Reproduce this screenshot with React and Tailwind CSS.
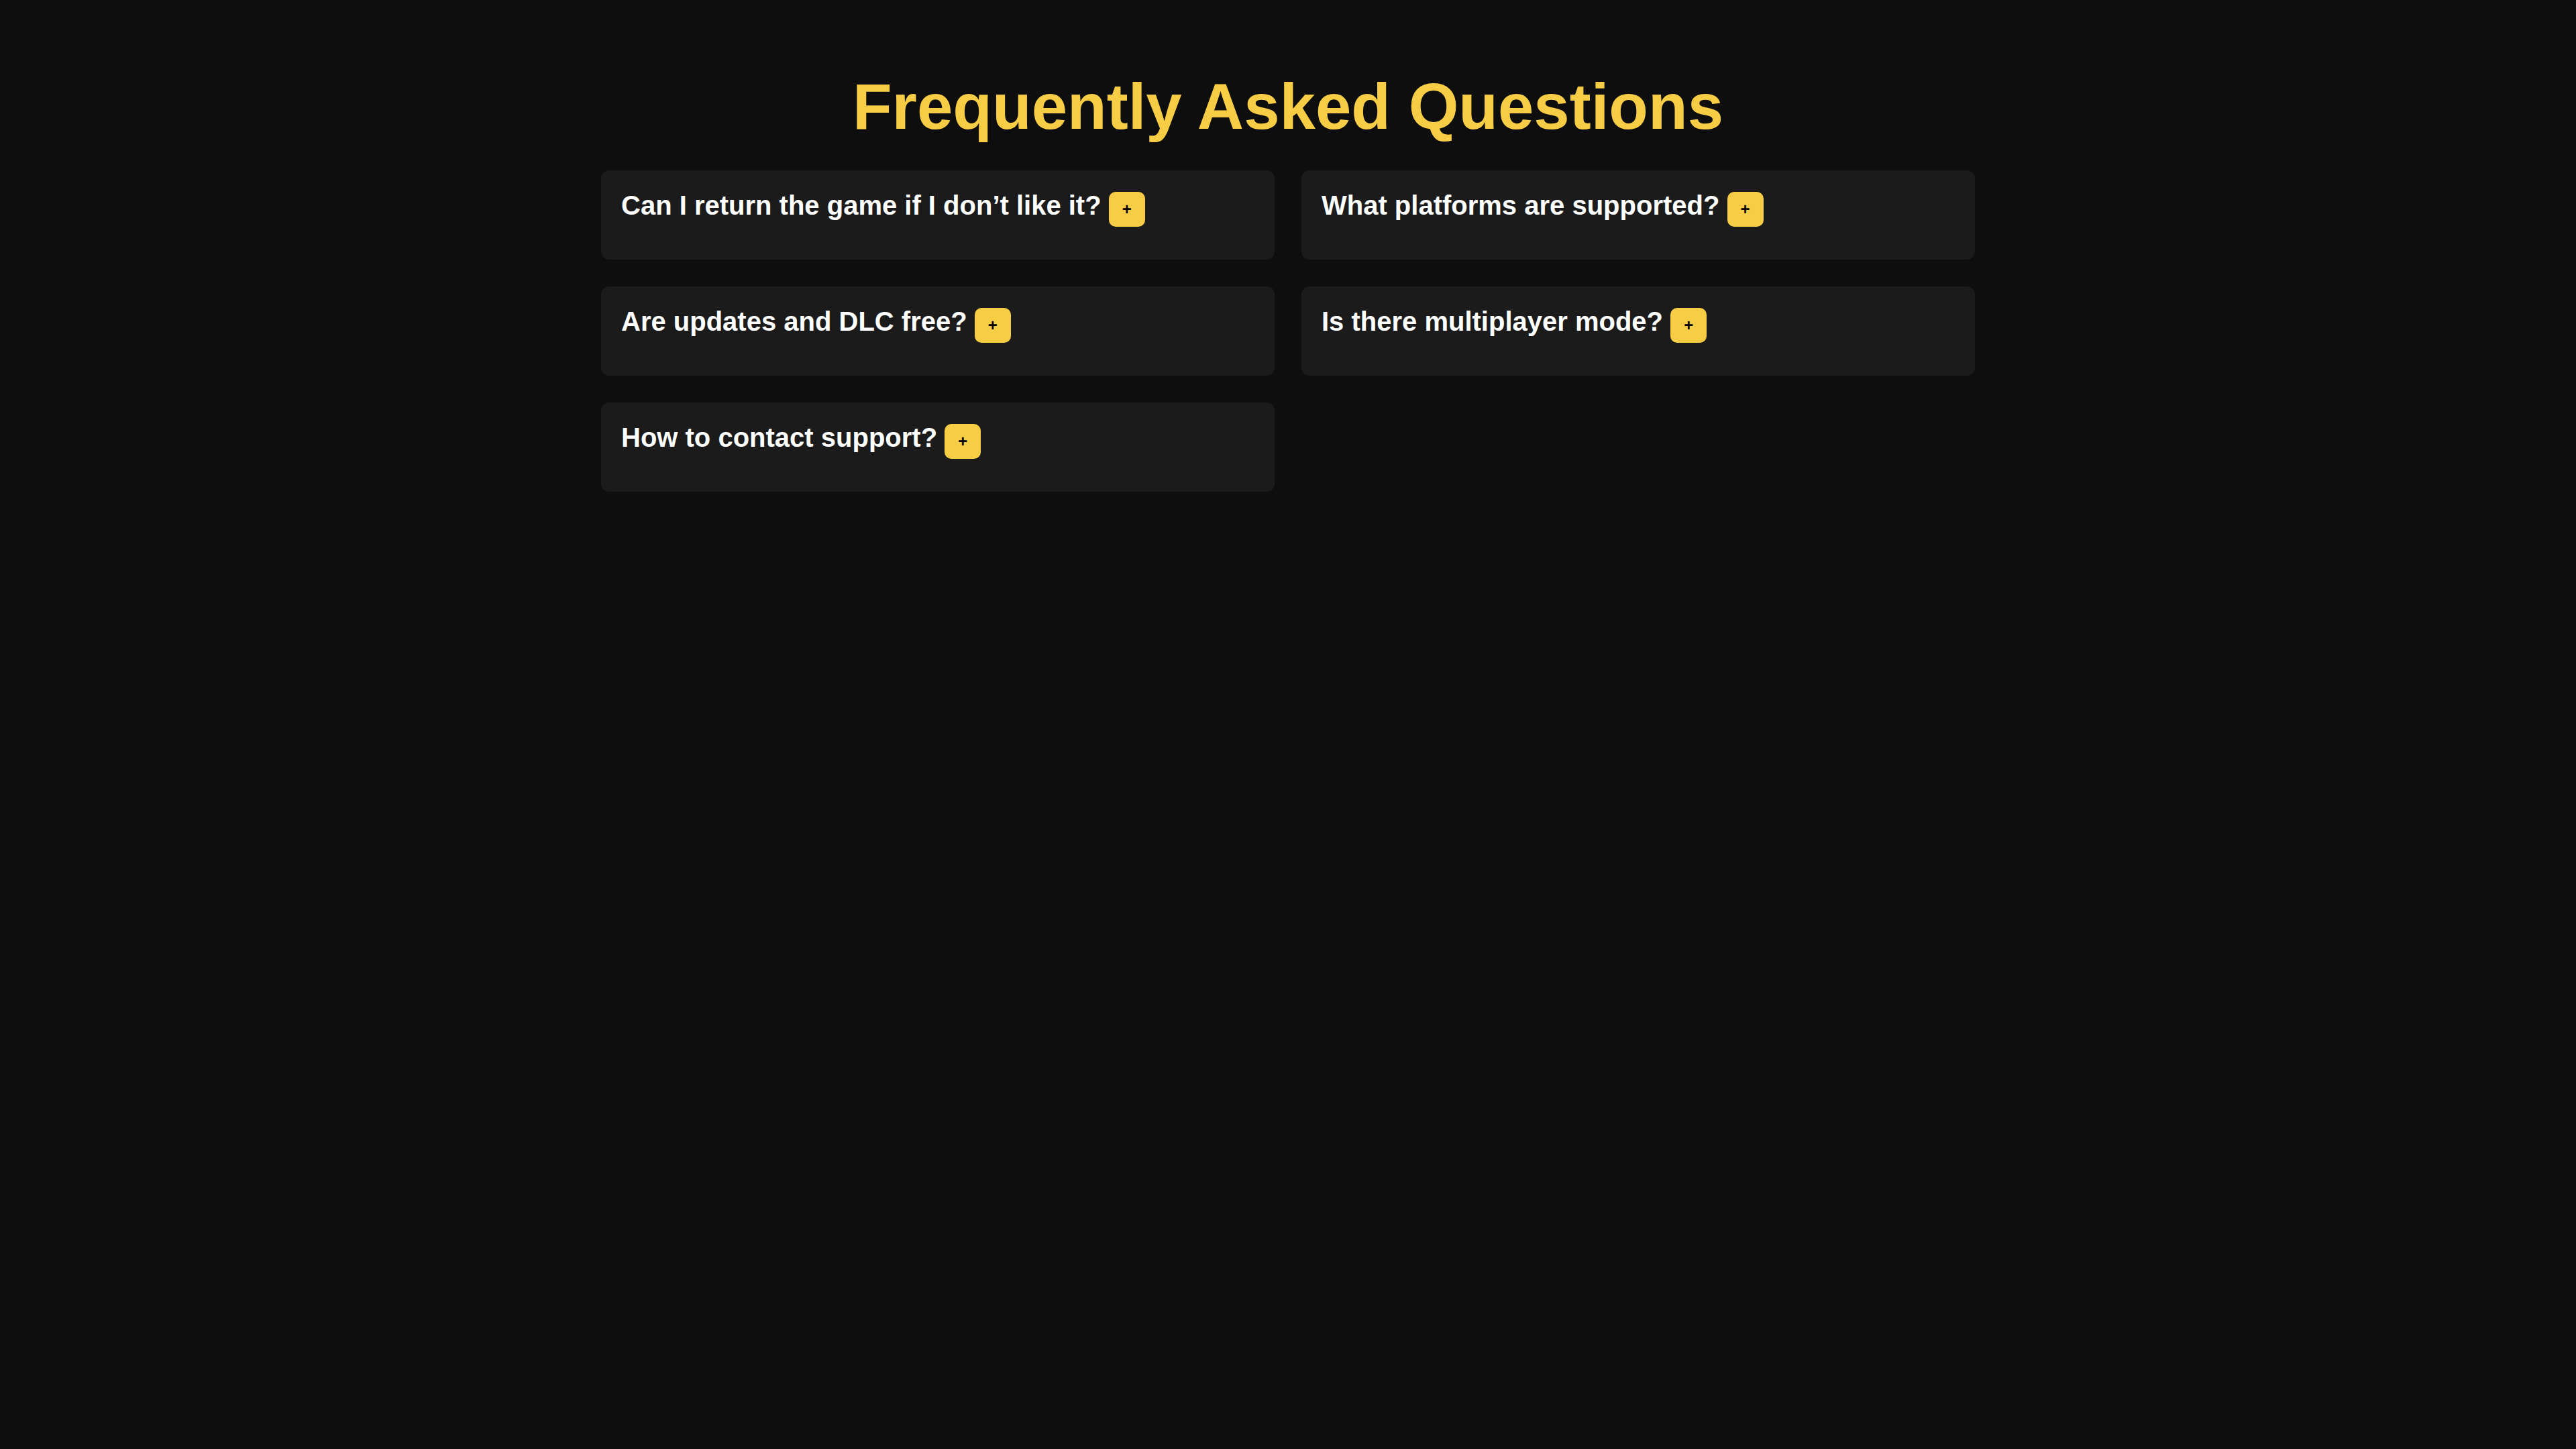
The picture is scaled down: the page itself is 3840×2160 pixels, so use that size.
const faqs = [
  'Can I return the game if I don’t like it?',
  'What platforms are supported?',
  'Are updates and DLC free?',
  'Is there multiplayer mode?',
  'How to contact support?',
]

function FaqCard({ question }) {
  return (
    <div className="rounded-[12px] bg-[#1b1b1b] px-[30px] pt-[30px] pb-[49px]">
      <h3 className="text-[40px] font-bold leading-[normal] text-white">
        {question}{' '}
        <button className="inline-block rounded-[10px] bg-[#f8cd46] px-[20px] py-[12px] text-[24px] leading-[normal] text-black">
          +
        </button>
      </h3>
    </div>
  )
}

export default function App() {
  return (
    <div
      className="min-h-screen bg-[#0e0e0e] pt-[104px]"
      style={{ fontFamily: '"Liberation Sans", Arial, sans-serif' }}
    >
      <h1 className="mb-[40px] text-center text-[96px] font-bold leading-[normal] text-[#f8cd46]">
        Frequently Asked Questions
      </h1>
      <div className="mx-auto grid w-[2048px] grid-cols-2 gap-[40px] items-start">
        {faqs.map((q) => (
          <FaqCard key={q} question={q} />
        ))}
      </div>
    </div>
  )
}
